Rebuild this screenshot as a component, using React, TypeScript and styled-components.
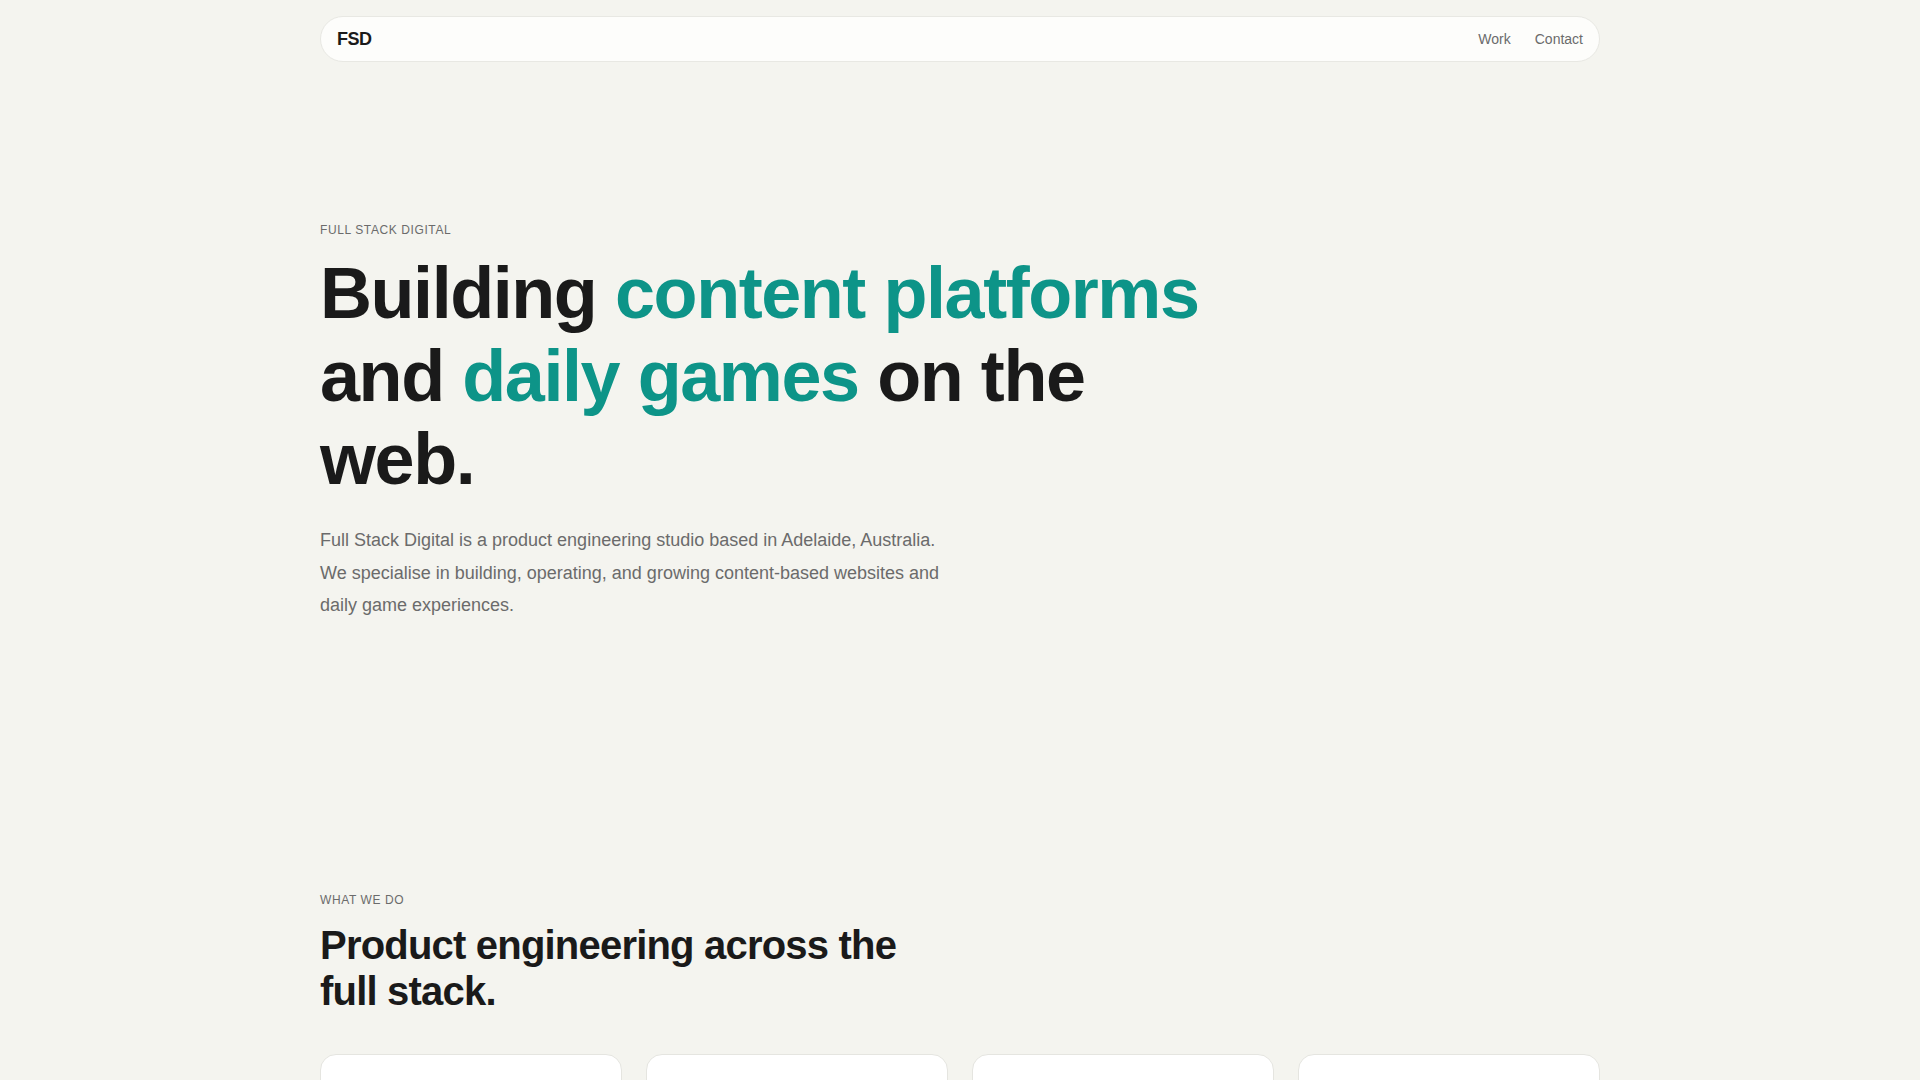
import React from 'react';
import styled, { createGlobalStyle } from 'styled-components';

const GlobalStyle = createGlobalStyle`
  * {
    box-sizing: border-box;
  }
  html,
  body {
    margin: 0;
    padding: 0;
    background-color: #f4f4ef;
    color: #1a1a1a;
    font-family: 'Liberation Sans', Arial, Helvetica, sans-serif;
  }
  h1,
  h2,
  h3,
  p {
    margin: 0;
  }
`;

const services = [
  {
    title: 'Content platforms',
    body: 'Publishing systems built for speed, search and scale.',
  },
  {
    title: 'Daily games',
    body: 'Puzzle and word games people come back to every day.',
  },
  {
    title: 'Growth',
    body: 'Audience, SEO and analytics that compound over time.',
  },
  {
    title: 'Operations',
    body: 'Hosting, monitoring and upkeep for products in production.',
  },
];

const App = () => {
  return (
    <>
      <GlobalStyle />
      <Page>
        <Header>
          <Nav>
            <Logo href="#">FSD</Logo>
            <NavLinks>
              <NavLink href="#work">Work</NavLink>
              <NavLink href="#contact">Contact</NavLink>
            </NavLinks>
          </Nav>
        </Header>

        {/* hero */}
        <Hero>
          <Eyebrow>Full Stack Digital</Eyebrow>
          <Headline>
            Building <Accent>content platforms</Accent> and{' '}
            <Accent>daily games</Accent> on the web.
          </Headline>
          <Lead>
            Full Stack Digital is a product engineering studio based in
            Adelaide, Australia. We specialise in building, operating, and
            growing content-based websites and daily game experiences.
          </Lead>
        </Hero>

        {/* what we do */}
        <Services>
          <Eyebrow>What we do</Eyebrow>
          <SectionTitle>Product engineering across the full stack.</SectionTitle>
          <CardGrid>
            {services.map((item) => (
              <Card key={item.title}>
                <CardTitle>{item.title}</CardTitle>
                <CardBody>{item.body}</CardBody>
              </Card>
            ))}
          </CardGrid>
        </Services>
      </Page>
    </>
  );
};

const Page = styled.div`
  width: 1280px;
  margin: 0 auto;
`;

const Header = styled.header`
  padding-top: 16px;
`;

const Nav = styled.nav`
  display: flex;
  align-items: center;
  justify-content: space-between;
  height: 46px;
  padding: 0 16px;
  background-color: #fdfdfb;
  border: 1px solid #e8e8e3;
  border-radius: 9999px;
`;

const Logo = styled.a`
  font-size: 18px;
  font-weight: 700;
  letter-spacing: -0.03em;
  color: #1a1a1a;
  text-decoration: none;
`;

const NavLinks = styled.div`
  display: flex;
  align-items: center;
  gap: 24px;
`;

const NavLink = styled.a`
  font-size: 14px;
  color: #6b6b6b;
  text-decoration: none;
`;

const Hero = styled.section`
  padding: 158px 0 128px;
`;

const Eyebrow = styled.p`
  margin-bottom: 12px;
  font-size: 12px;
  line-height: 20px;
  letter-spacing: 0.05em;
  text-transform: uppercase;
  color: #6b6b6b;
`;

const Headline = styled.h1`
  max-width: 900px;
  font-size: 72px;
  font-weight: 700;
  line-height: 1.15;
  letter-spacing: -0.02em;
  color: #1a1a1a;
`;

const Accent = styled.span`
  color: #0d9488;
`;

const Lead = styled.p`
  max-width: 640px;
  margin-top: 24px;
  font-size: 18px;
  line-height: 1.8;
  color: #6b6b6b;
`;

const Services = styled.section`
  padding: 140px 0 120px;
`;

const SectionTitle = styled.h2`
  max-width: 640px;
  font-size: 40px;
  font-weight: 700;
  line-height: 1.15;
  letter-spacing: -0.02em;
  color: #1a1a1a;
`;

const CardGrid = styled.div`
  display: grid;
  grid-template-columns: repeat(4, 1fr);
  gap: 24px;
  margin-top: 40px;
`;

const Card = styled.div`
  min-height: 220px;
  padding: 36px 28px;
  background-color: #ffffff;
  border: 1px solid #e5e5e0;
  border-radius: 16px;
`;

const CardTitle = styled.h3`
  font-size: 20px;
  font-weight: 700;
  letter-spacing: -0.01em;
  color: #1a1a1a;
`;

const CardBody = styled.p`
  margin-top: 12px;
  font-size: 15px;
  line-height: 1.6;
  color: #6b6b6b;
`;

export default App;
